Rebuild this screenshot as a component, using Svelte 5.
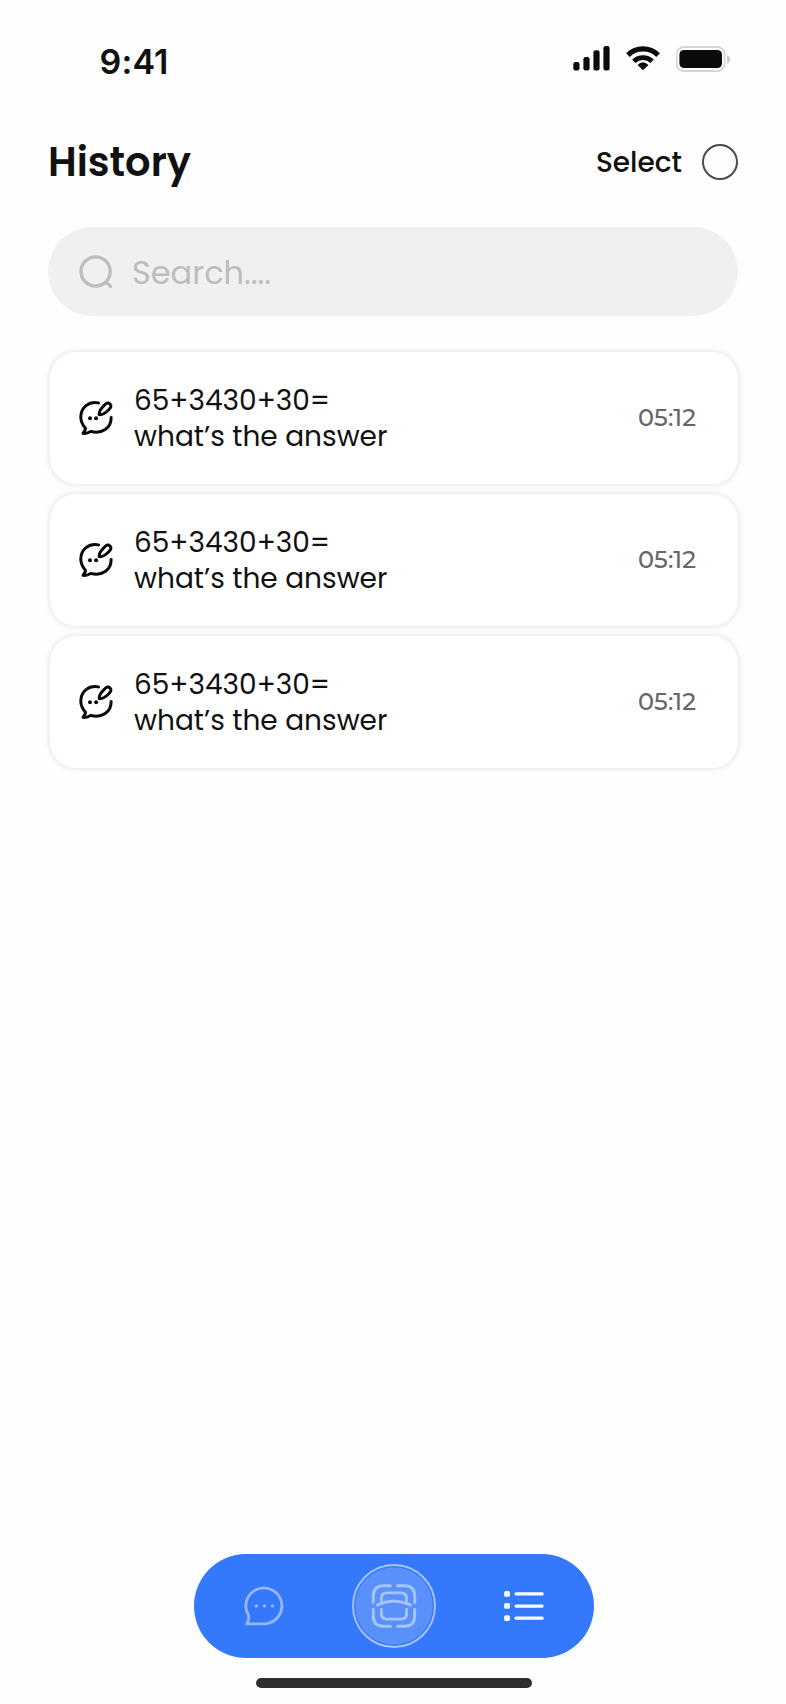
<script>
  const items = [
    { question: '65+3430+30=', detail: 'what’s the answer', time: '05:12' },
    { question: '65+3430+30=', detail: 'what’s the answer', time: '05:12' },
    { question: '65+3430+30=', detail: 'what’s the answer', time: '05:12' }
  ];
</script>

<main class="screen">
  <div class="status">
    <span class="clock">9:41</span>
    <div class="indicators">
      <svg width="37" height="25" viewBox="0 0 37 25" fill="#0b0b0b">
        <rect x="0.3" y="16" width="6.2" height="8.5" rx="2.2" />
        <rect x="10.4" y="11" width="6.2" height="13.5" rx="2.2" />
        <rect x="20.4" y="4.2" width="6.2" height="20.3" rx="2.2" />
        <rect x="30.4" y="0" width="6.2" height="24.5" rx="2.2" />
      </svg>
      <svg class="wifi" width="34" height="25" viewBox="0 0 34 25" fill="none" stroke="#0b0b0b" stroke-width="5.2">
        <path d="M1.9 9.1A21.5 21.5 0 0 1 32.1 9.1" />
        <path d="M7.8 15.3A13.3 13.3 0 0 1 26.2 15.3" stroke-width="4.9" />
        <path d="M17 24.2L11.5 18.9Q17 13.8 22.5 18.9Z" fill="#0b0b0b" stroke="none" />
      </svg>
      <svg width="55" height="26" viewBox="0 0 55 26">
        <rect x="0.6" y="1" width="48" height="24" rx="7.2" fill="none" stroke="#d6d6d6" stroke-width="1.9" />
        <rect x="3.4" y="4" width="42.6" height="18" rx="4.6" fill="#0b0b0b" />
        <path d="M51 9.5Q54.1 10.5 54.1 13.3T51 17.5Z" fill="#c9c9c9" />
      </svg>
    </div>
  </div>

  <header>
    <h1>History</h1>
    <button class="select">
      <span>Select</span>
      <i></i>
    </button>
  </header>

  <div class="search">
    <svg width="36" height="36" viewBox="0 0 36 36" fill="none" stroke="#bdbdbd" stroke-width="3.3" stroke-linecap="round">
      <circle cx="16.6" cy="17.4" r="14.6" />
      <path d="M27.4 28.6L31.6 32.4" />
    </svg>
    <span>Search....</span>
  </div>

  <section>
    {#each items as item}
      <article>
        <svg width="36" height="36" viewBox="0 0 36 36" fill="none" stroke="#090909" stroke-width="3" stroke-linecap="round" stroke-linejoin="round">
          <path d="M20.5 2.9C10.8 1 2.9 7.4 2.8 17C2.7 22.2 5.4 25.9 7.4 28.3C7.8 30.5 5.8 31.6 5.1 33.3C8.6 33.7 10.8 32.7 12.6 31.4C23.9 34.6 33.4 28 33.1 17.4" />
          <path d="M21.2 14.6C20.9 11.2 22.4 9.5 26.3 5.3C28.6 2.8 30.1 2.2 31.9 3.9C33.7 5.6 33.1 7.4 30.8 9.7C26.7 13.8 24.6 15.1 21.2 14.6Z" />
          <circle cx="12" cy="18.2" r="2" fill="#090909" stroke="none" />
          <circle cx="18.1" cy="18.2" r="2" fill="#090909" stroke="none" />
        </svg>
        <div class="copy">
          <div class="question">{item.question}</div>
          <div class="detail">{item.detail}</div>
        </div>
        <time>{item.time}</time>
      </article>
    {/each}
  </section>

  <footer>
    <nav>
      <button aria-label="Chat">
        <svg class="chat" width="40" height="40" viewBox="0 0 40 40" fill="none" stroke="#94b8fd" stroke-width="2.8" stroke-linejoin="round">
          <path d="M2.7 37.9Q5.5 33.2 4.5 29.3A18 18 0 1 1 21 37.9Z" />
          <g fill="#a5c3fd" stroke="none">
            <circle cx="12.4" cy="20" r="1.6" />
            <circle cx="20.4" cy="20" r="1.6" />
            <circle cx="28.4" cy="20" r="1.6" />
          </g>
        </svg>
      </button>
      <button aria-label="Scan">
        <svg width="84" height="84" viewBox="0 0 84 84" fill="none" stroke="#a6c4fd" stroke-width="2.9" stroke-linecap="round">
          <circle cx="42" cy="42" r="38.8" fill="#5a90f9" stroke="none" />
          <circle cx="42" cy="42" r="41" stroke-width="1.9" />
          <path d="M38.5 21.8H31.5Q21.3 21.8 21.3 32V38.5M45.5 21.8H52.5Q62.7 21.8 62.7 32V38.5M21.3 45.5V52Q21.3 62.2 31.5 62.2H38.5M62.7 45.5V52Q62.7 62.2 52.5 62.2H45.5" />
          <path d="M29.4 37V34.5Q29.4 28.9 35 28.9H49Q54.6 28.9 54.6 34.5V37M29.4 45.5V49.5Q29.4 55.1 35 55.1H49Q54.6 55.1 54.6 49.5V45.5" />
          <path d="M25.6 40.9Q42 33.3 58.4 40.9" />
        </svg>
      </button>
      <button aria-label="History">
        <svg width="40" height="30" viewBox="0 0 40 30" fill="#fafcff">
          <rect x="0.2" y="0" width="5.7" height="5.7" rx="1.5" />
          <rect x="0.2" y="12.1" width="5.7" height="5.7" rx="1.5" />
          <rect x="0.2" y="24.2" width="5.7" height="5.7" rx="1.5" />
          <rect x="10.5" y="1.3" width="29.2" height="3.3" rx="1.6" />
          <rect x="10.5" y="13.4" width="29.2" height="3.3" rx="1.6" />
          <rect x="10.5" y="25.5" width="29.2" height="3.3" rx="1.6" />
        </svg>
      </button>
    </nav>
    <div class="home"></div>
  </footer>
</main>

<style>
  :global(body) {
    background: #fefefe;
  }
  .screen {
    box-sizing: border-box;
    width: 786px;
    height: 1704px;
    display: flex;
    flex-direction: column;
    padding: 0 48px 16px;
    background: #fefefe;
    color: #111;
    font-family: Poppins, Inter, sans-serif;
    white-space: nowrap;
    overflow: hidden;
  }
  svg {
    display: block;
    flex: none;
  }
  button {
    padding: 0;
    border: 0;
    background: none;
    font: inherit;
    color: inherit;
  }
  .status {
    height: 134px;
    display: flex;
    justify-content: space-between;
    padding: 0 7px 0 51.5px;
    box-sizing: border-box;
  }
  .clock {
    font: 600 34px/40px Inter, sans-serif;
    padding-top: 42px;
    letter-spacing: 0.15px;
  }
  .indicators {
    display: flex;
    padding-top: 46px;
  }
  .wifi {
    margin: 0 16px;
  }
  header {
    height: 56px;
    display: flex;
    align-items: center;
    justify-content: space-between;
  }
  h1 {
    margin: 0;
    font-size: 40px;
    font-weight: 600;
    line-height: 56px;
  }
  .select {
    display: flex;
    align-items: center;
    font-size: 28px;
    font-weight: 500;
    line-height: 56px;
    gap: 20px;
  }
  .select span {
    padding-top: 1px;
  }
  .select i {
    box-sizing: border-box;
    width: 36px;
    height: 36px;
    border: 2px solid #4b4b4b;
    border-radius: 50%;
  }
  .search {
    height: 89px;
    margin-top: 37px;
    padding-left: 31px;
    display: flex;
    align-items: center;
    gap: 17px;
    border-radius: 45px;
    background: #f0f0f0;
    color: #bdbdbd;
    font-size: 32px;
  }
  .search span {
    padding-top: 2px;
  }
  section {
    margin: 36px 0 0 2px;
    display: flex;
    flex-direction: column;
    gap: 10px;
  }
  article {
    box-sizing: border-box;
    height: 132px;
    display: flex;
    align-items: center;
    padding: 0 42px 0 28px;
    border-radius: 26px;
    background: #fff;
    box-shadow: 0 0 6px rgba(0, 0, 0, 0.14);
  }
  .copy {
    margin-left: 20px;
    padding-top: 2px;
    font-size: 28px;
    line-height: 36px;
  }
  time {
    margin-left: auto;
    font: 500 24px/30px Montserrat, Inter, sans-serif;
    color: #666;
  }
  footer {
    margin-top: auto;
    display: flex;
    flex-direction: column;
    align-items: center;
    gap: 20px;
  }
  nav {
    box-sizing: border-box;
    width: 400px;
    height: 104px;
    margin-left: 2px;
    display: flex;
    align-items: center;
    justify-content: space-between;
    padding: 0 50px;
    border-radius: 52px;
    background: #3478fc;
  }
  .chat {
    overflow: visible;
  }
  .home {
    width: 276px;
    height: 10px;
    margin-left: 2px;
    border-radius: 5px;
    background: #2e2e2e;
  }
</style>
